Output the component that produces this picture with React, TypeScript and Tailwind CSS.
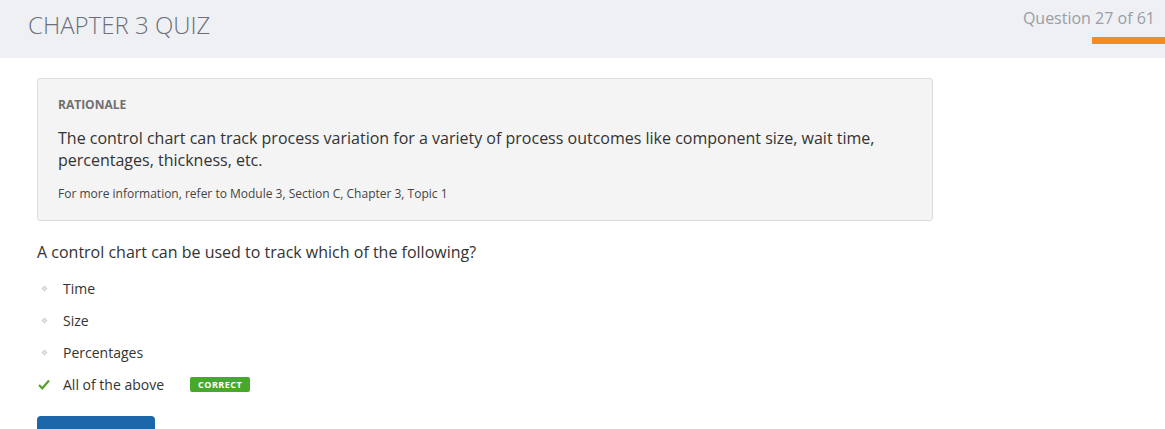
import React from 'react';

const options = [
  { label: 'Time', correct: false },
  { label: 'Size', correct: false },
  { label: 'Percentages', correct: false },
  { label: 'All of the above', correct: true },
];

const Dot = () => (
  <svg width="7" height="7" viewBox="0 0 7 7" className="block">
    <path d="M3.5 0.5 L6.5 3.5 L3.5 6.5 L0.5 3.5 Z" fill="#d0d0d0" />
    <rect x="2.6" y="2.6" width="1.8" height="1.8" fill="#f4f4f4" />
  </svg>
);

const Check = () => (
  <svg width="12" height="11" viewBox="0 0 12 11" className="block">
    <path d="M1 6 L4.3 9.3 L11 1.5" fill="none" stroke="#5aa02c" strokeWidth="2.2" />
  </svg>
);

export default function App() {
  return (
    <div
      className="w-[1165px] h-[429px] overflow-hidden bg-white text-[#333]"
      style={{ fontFamily: '"Open Sans", "Liberation Sans", sans-serif' }}
    >
      {/* Header */}
      <div className="h-[58px] bg-[#eff0f4] flex justify-between">
        <h1 className="pl-[28px] pt-[9px] text-[24px] font-light text-[#6b707a] leading-[32px]">
          CHAPTER 3 QUIZ
        </h1>
        <div className="flex flex-col items-end">
          <p className="pr-[10px] pt-[7px] text-[16px] leading-[22px] text-[#9a9ea6]">Question 27 of 61</p>
          <div className="mt-[8px] w-[73px] h-[7px] bg-[#f58a1f] rounded-l-[1px]"></div>
        </div>
      </div>

      <div className="pl-[37px] pt-[20px] w-[933px]">
        {/* Rationale */}
        <div className="bg-[#f4f4f4] border border-[#dcdcdc] rounded-[3px] px-[20px] pt-[18px] pb-[18px]">
          <p className="text-[12px] font-bold text-[#707070] leading-[16px]">RATIONALE</p>
          <p className="mt-[14px] text-[16px] leading-[22px] text-[#333]">
            The control chart can track process variation for a variety of process outcomes like component size, wait time, percentages, thickness, etc.
          </p>
          <p className="mt-[15px] text-[12px] leading-[16px] text-[#444]">
            For more information, refer to Module 3, Section C, Chapter 3, Topic 1
          </p>
        </div>

        {/* Question */}
        <p className="mt-[19px] text-[16px] leading-[24px] text-[#333]">
          A control chart can be used to track which of the following?
        </p>

        <ul className="mt-[14px] flex flex-col gap-[12px]">
          {options.map((o) => (
            <li key={o.label} className="flex items-center h-[20px] text-[14px] text-[#333]">
              <span className="w-[26px] flex justify-start pl-[1px]">
                {o.correct ? <Check /> : <span className="pl-[3px]"><Dot /></span>}
              </span>
              <span>{o.label}</span>
              {o.correct && (
                <span className="ml-[26px] bg-[#48a82a] text-white text-[9px] font-bold tracking-[0.5px] leading-[15px] h-[15px] px-[8px] rounded-[2px]">
                  CORRECT
                </span>
              )}
            </li>
          ))}
        </ul>

        <button className="mt-[22px] w-[118px] h-[36px] bg-[#1a66a8] text-white text-[14px] font-semibold rounded-[4px]">
          Next question
        </button>
      </div>
    </div>
  );
}
